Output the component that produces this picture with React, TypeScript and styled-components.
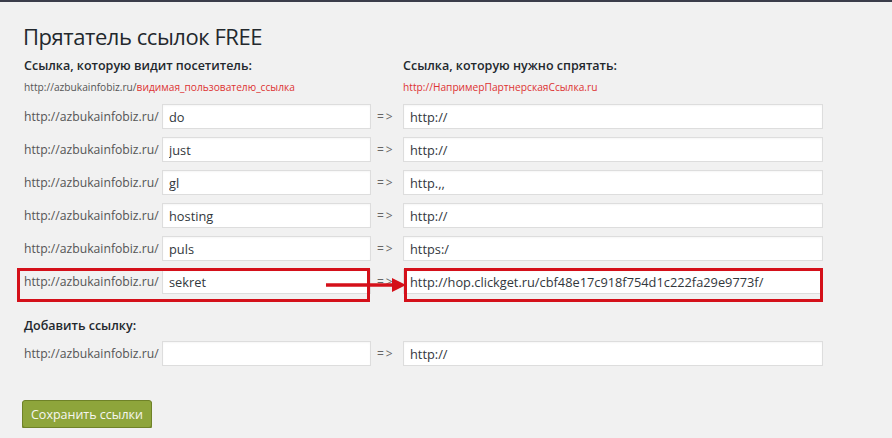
import React from "react"
import styled, { createGlobalStyle } from "styled-components"

const GlobalStyle = createGlobalStyle`
  html, body {
    margin: 0;
    padding: 0;
    background: #f1f1f1;
  }
  body {
    border-top: 2px solid #3b3d4a;
    font-family: "Open Sans", "Noto Sans", sans-serif;
    color: #32373c;
  }
`

type LinkRow = {
  slug: string
  target: string
  marked?: boolean
}

const rows: LinkRow[] = [
  { slug: "do", target: "http://" },
  { slug: "just", target: "http://" },
  { slug: "gl", target: "http.,," },
  { slug: "hosting", target: "http://" },
  { slug: "puls", target: "https:/" },
  { slug: "sekret", target: "http://hop.clickget.ru/cbf48e17c918f754d1c222fa29e9773f/", marked: true },
]

const PREFIX = "http://azbukainfobiz.ru/"

export default function App() {
  return (
    <>
      <GlobalStyle />
      <S.Page>
        <S.Title>Прятатель ссылок FREE</S.Title>

        <S.Grid>
          <S.ColumnHeader span={3}>Ссылка, которую видит посетитель:</S.ColumnHeader>
          <S.ColumnHeader span={1}>Ссылка, которую нужно спрятать:</S.ColumnHeader>
        </S.Grid>
        <S.Grid>
          <S.Example span={3}>
            {PREFIX}
            <S.Red>видимая_пользователю_ссылка</S.Red>
          </S.Example>
          <S.Example span={1}>
            <S.Red>http://НапримерПартнерскаяСсылка.ru</S.Red>
          </S.Example>
        </S.Grid>

        <S.Rows>
          {rows.map((r) => (
            <S.Row key={r.slug}>
              <S.Prefix>{PREFIX}</S.Prefix>
              <S.Input defaultValue={r.slug} />
              <S.Arrow>=&gt;</S.Arrow>
              <S.Input defaultValue={r.target} />
              {r.marked && (
                <>
                  <S.Mark side="left" />
                  <S.Mark side="right" />
                  <S.Pointer width="84" height="16" viewBox="0 0 84 16">
                    <line x1="2" y1="8" x2="70" y2="8" stroke="#d4101a" strokeWidth="3.5" />
                    <polygon points="68,1 82,8 68,15" fill="#d4101a" />
                  </S.Pointer>
                </>
              )}
            </S.Row>
          ))}
        </S.Rows>

        <S.AddHeader>Добавить ссылку:</S.AddHeader>
        <S.Row>
          <S.Prefix>{PREFIX}</S.Prefix>
          <S.Input defaultValue="" />
          <S.Arrow>=&gt;</S.Arrow>
          <S.Input defaultValue="http://" />
        </S.Row>

        <S.SaveButton>Сохранить ссылки</S.SaveButton>
      </S.Page>
    </>
  )
}

const S = {
  Page: styled.div`
    padding: 19px 0 0 24px;
  `,
  Title: styled.h1`
    margin: 0 0 0 -1px;
    font-size: 22px;
    line-height: 30px;
    letter-spacing: -0.45px;
    font-weight: 400;
    color: #23282d;
  `,
  Grid: styled.div`
    display: grid;
    grid-template-columns: 138px 209px 32px 420px;
  `,
  ColumnHeader: styled.div<{ span: number }>`
    grid-column: span ${({ span }) => span};
    margin-top: 6px;
    font-size: 12.5px;
    line-height: 18px;
    font-weight: 600;
    color: #23282d;
  `,
  Example: styled.div<{ span: number }>`
    grid-column: span ${({ span }) => span};
    margin-top: 4px;
    font-size: 10.2px;
    line-height: 16px;
    color: #555;
  `,
  Red: styled.span`
    color: #dd3333;
  `,
  Rows: styled.div`
    display: flex;
    flex-direction: column;
    gap: 8px;
    margin-top: 9px;
  `,
  Row: styled.div`
    position: relative;
    display: grid;
    grid-template-columns: 138px 209px 32px 420px;
    align-items: center;
    height: 25px;
  `,
  Prefix: styled.div`
    font-size: 12.2px;
    color: #555;
    white-space: nowrap;
  `,
  Input: styled.input`
    box-sizing: border-box;
    width: 100%;
    height: 25px;
    margin: 0;
    padding: 0 6px;
    border: 1px solid #ddd;
    box-shadow: inset 0 1px 2px rgba(0, 0, 0, 0.04);
    background: #fff;
    font-family: "Open Sans", "Noto Sans", sans-serif;
    font-size: 12.8px;
    color: #32373c;
    outline: none;
  `,
  Arrow: styled.div`
    padding-left: 6px;
    font-size: 12px;
    letter-spacing: 2px;
    color: #666;
  `,
  Mark: styled.div<{ side: "left" | "right" }>`
    position: absolute;
    box-sizing: border-box;
    top: -1px;
    height: 34px;
    left: ${({ side }) => (side === "left" ? "-7px" : "380px")};
    width: ${({ side }) => (side === "left" ? "353px" : "419px")};
    border: 3px solid #d4101a;
    pointer-events: none;
  `,
  Pointer: styled.svg`
    position: absolute;
    left: 300px;
    top: 8px;
  `,
  AddHeader: styled.div`
    margin-top: 23px;
    margin-bottom: 6px;
    font-size: 12.5px;
    line-height: 18px;
    font-weight: 600;
    color: #23282d;
  `,
  SaveButton: styled.button`
    display: block;
    box-sizing: border-box;
    margin: 34px 0 0 -2px;
    width: 130px;
    height: 28px;
    padding: 0;
    border: 1px solid #6f8228;
    border-radius: 3px;
    background: #8ea53b;
    box-shadow: 0 1px 0 #6f8228;
    font-family: "Open Sans", "Noto Sans", sans-serif;
    font-size: 12.5px;
    color: #f6f6f0;
    cursor: pointer;
  `,
}
